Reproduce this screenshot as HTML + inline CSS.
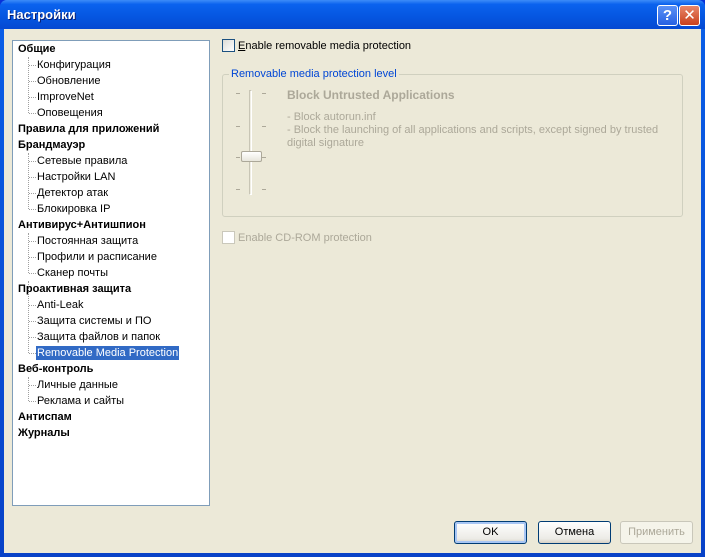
<!DOCTYPE html>
<html><head><meta charset="utf-8"><style>
*{margin:0;padding:0;box-sizing:border-box}
body{width:705px;height:557px;overflow:hidden;font:11px "Liberation Sans","DejaVu Sans",sans-serif;background:#0831d9}
.win{position:absolute;left:0;top:0;width:705px;height:557px;background:linear-gradient(#0a5fe8,#0842c8);border-radius:7px 7px 0 0}
.title{position:absolute;left:0;top:0;width:705px;height:29px;background:linear-gradient(#3d8cf8 0,#0a62ee 15%,#0555e0 60%,#0549d2 100%);border-radius:7px 7px 0 0}
.title span{position:absolute;left:7px;top:7px;color:#fff;font-weight:bold;font-size:13px;text-shadow:1px 1px #0a1d6e}
.tb{position:absolute;top:5px;width:21px;height:21px;border:1px solid #fff;border-radius:3px;color:#fff;font-weight:bold;text-align:center;font-size:15px;line-height:19px}
.client{position:absolute;left:4px;top:29px;width:697px;height:524px;background:#ece9d8}
.tree{position:absolute;left:12px;top:40px;width:198px;height:466px;background:#fff;border:1px solid #7f9db9}
.it{position:absolute;white-space:nowrap;height:14px;line-height:14px}
.b{left:18px;font-weight:bold;color:#000}
.c{left:37px;color:#000}
.dl{position:absolute;left:28px;border-left:1px dotted #a0a0a0}
.dh{position:absolute;left:29px;width:7px;border-top:1px dotted #a0a0a0}
.gray{color:#aca899}
.tk{position:absolute;width:4px;height:1px;background:#aca899}
.btn{position:absolute;top:521px;width:73px;height:23px;border:1px solid #003c74;border-radius:3px;background:linear-gradient(#fff,#ecebe6 80%,#d6d0c5);text-align:center;line-height:21px}
</style></head><body>
<div class="win"></div>
<div class="title"><span>Настройки</span>
<div class="tb" style="left:657px;background:linear-gradient(#5c92f6,#2660e3)">?</div>
<div class="tb" style="left:679px;background:linear-gradient(#e8866a,#c9401c)">✕</div></div>
<div class="client"></div>
<div class="tree"></div>
<div class="dl" style="top:57px;height:56px"></div>
<div class="dl" style="top:153px;height:56px"></div>
<div class="dl" style="top:233px;height:40px"></div>
<div class="dl" style="top:281px;height:72px"></div>
<div class="dl" style="top:377px;height:24px"></div>
<div id="items"></div>
<script>
var L=[["b","Общие"],["c","Конфигурация"],["c","Обновление"],["c","ImproveNet"],["c","Оповещения"],["b","Правила для приложений"],["b","Брандмауэр"],["c","Сетевые правила"],["c","Настройки LAN"],["c","Детектор атак"],["c","Блокировка IP"],["b","Антивирус+Антишпион"],["c","Постоянная защита"],["c","Профили и расписание"],["c","Сканер почты"],["b","Проактивная защита"],["c","Anti-Leak"],["c","Защита системы и ПО"],["c","Защита файлов и папок"],["c","Removable Media Protection"],["b","Веб-контроль"],["c","Личные данные"],["c","Реклама и сайты"],["b","Антиспам"],["b","Журналы"]];
var h="";L.forEach(function(e,i){var y=42+i*16;
if(e[0]=="c")h+='<div class="dh" style="top:'+(y+7)+'px"></div>';
var st=i==19?'background:#316ac5;color:#fff;padding:0 1px;left:36px;':'';
h+='<div class="it '+e[0]+'" style="top:'+y+'px;'+st+'">'+e[1]+'</div>';});
document.getElementById("items").innerHTML=h;
</script>
<div style="position:absolute;left:222px;top:39px;width:13px;height:13px;border:1px solid #1c5180;background:linear-gradient(135deg,#dcdcd7,#fff)"></div>
<div class="it" style="left:238px;top:39px"><u>E</u>nable removable media protection</div>
<div style="position:absolute;left:222px;top:74px;width:461px;height:143px;border:1px solid #d0d0bf;border-radius:3px"></div>
<div class="it" style="left:229px;top:67px;background:#ece9d8;padding:0 2px;color:#0046d5">Removable media protection level</div>
<div style="position:absolute;left:249px;top:90px;width:3px;height:105px;border:1px solid #c8c5b5;border-right-color:#fff;border-bottom-color:#fff;background:#f0eee4"></div>
<div class="tk" style="left:236px;top:93px"></div><div class="tk" style="left:262px;top:93px"></div>
<div class="tk" style="left:236px;top:126px"></div><div class="tk" style="left:262px;top:126px"></div>
<div class="tk" style="left:236px;top:157px"></div><div class="tk" style="left:262px;top:157px"></div>
<div class="tk" style="left:236px;top:189px"></div><div class="tk" style="left:262px;top:189px"></div>
<div style="position:absolute;left:241px;top:151px;width:21px;height:11px;border:1px solid #aca899;border-radius:2px;background:linear-gradient(#fff,#e8e6dc)"></div>
<div class="it gray" style="left:287px;top:88px;font-weight:bold;font-size:12px">Block Untrusted Applications</div>
<div class="gray" style="position:absolute;left:287px;top:111px;width:380px;line-height:13px">- Block autorun.inf<br>- Block the launching of all applications and scripts, except signed by trusted digital signature</div>
<div style="position:absolute;left:222px;top:231px;width:13px;height:13px;border:1px solid #cac8bb;background:#fff"></div>
<div class="it gray" style="left:238px;top:231px">Enable CD-ROM protection</div>
<div class="btn" style="left:454px;box-shadow:inset 0 0 0 2px #a8c6f4">OK</div>
<div class="btn" style="left:538px">Отмена</div>
<div class="btn gray" style="left:620px;border-color:#c9c7ba;background:#f5f4ea">Применить</div>
</body></html>
